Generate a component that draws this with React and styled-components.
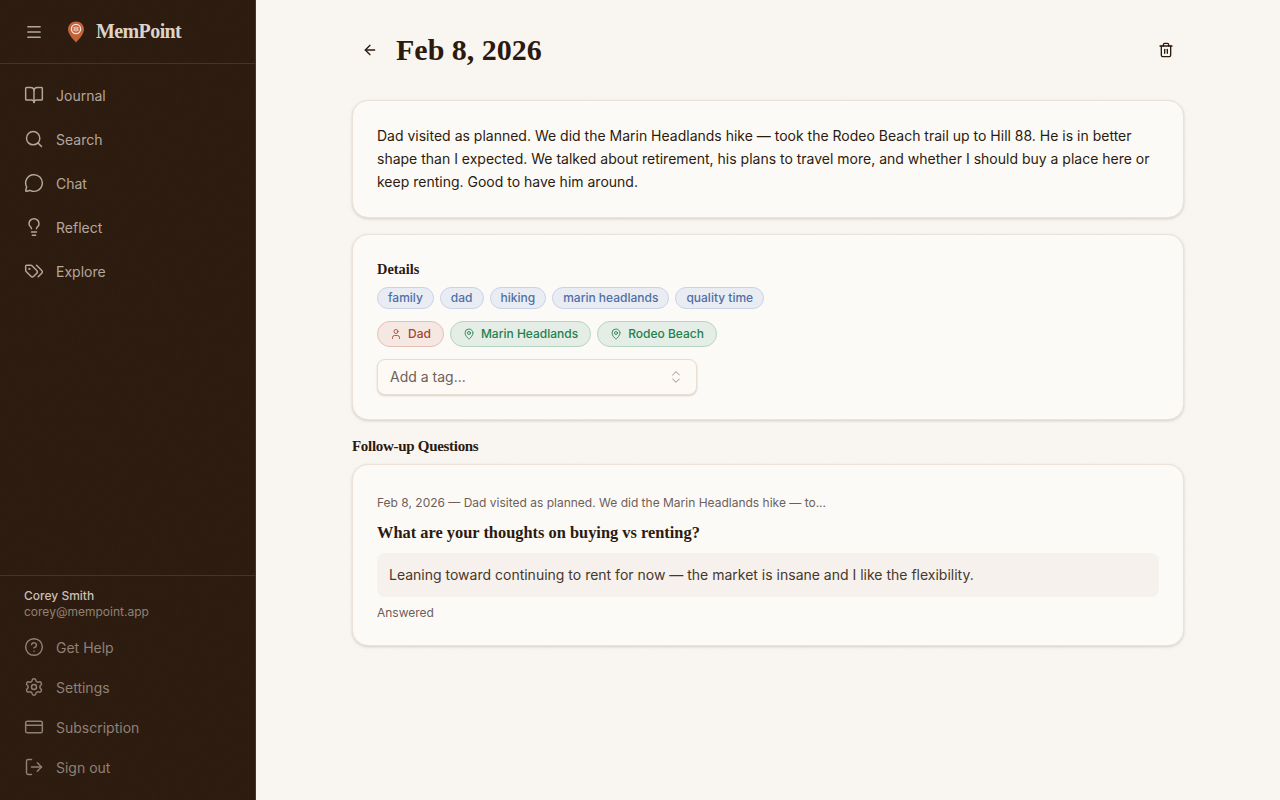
import styled, { createGlobalStyle } from "styled-components";
import {
  Menu,
  BookOpen,
  Search,
  MessageCircle,
  Lightbulb,
  CircleHelp,
  Settings,
  CreditCard,
  LogOut,
  ArrowLeft,
  Trash2,
  User,
  MapPin,
  ChevronsUpDown,
} from "lucide-react";

// paper grain, generated by the browser from an svg filter
const grain = `url("data:image/svg+xml,%3Csvg xmlns='http://www.w3.org/2000/svg' width='256' height='256'%3E%3Cfilter id='n'%3E%3CfeTurbulence type='fractalNoise' baseFrequency='0.8' numOctaves='3' stitchTiles='stitch'/%3E%3CfeColorMatrix type='saturate' values='0'/%3E%3C/filter%3E%3Crect width='256' height='256' filter='url(%23n)' opacity='0.04'/%3E%3C/svg%3E")`;

const GlobalStyle = createGlobalStyle`
  * { box-sizing: border-box; }
  html, body { margin: 0; padding: 0; height: 100%; }
  body {
    font-family: Inter, "Liberation Sans", sans-serif;
    background-color: #faf7f2;
    background-image: ${grain};
    color: #2c1a0e;
  }
`;

const serif = `"Liberation Serif", "DejaVu Serif", serif`;

const Shell = styled.div`
  display: flex;
  width: 100%;
  height: 100vh;
  overflow: hidden;
`;

const Sidebar = styled.aside`
  width: 256px;
  flex-shrink: 0;
  height: 100%;
  display: flex;
  flex-direction: column;
  background-color: #2a180c;
  background-image: ${grain};
  border-right: 1px solid #4a3528;
`;

const Brand = styled.div`
  height: 64px;
  display: flex;
  align-items: center;
  padding-left: 25px;
  border-bottom: 1px solid #46342a;
  color: #b3a79c;
`;

const Logo = styled.svg`
  margin-left: 23px;
  width: 20px;
  height: 22px;
`;

const BrandName = styled.span`
  margin-left: 10px;
  font-family: ${serif};
  font-size: 20px;
  font-weight: 700;
  letter-spacing: -0.6px;
  color: #dcd3c9;
`;

const Nav = styled.nav`
  flex: 1;
  padding-top: 9px;
  display: flex;
  flex-direction: column;
`;

const NavItem = styled.a`
  height: ${(p) => (p.$small ? "40px" : "44px")};
  display: flex;
  align-items: center;
  gap: 12px;
  padding-left: 24px;
  font-size: 14px;
  color: ${(p) => (p.$small ? "#8f8175" : "#b3a79c")};

  svg {
    width: 20px;
    height: 20px;
    stroke-width: 1.75;
    flex-shrink: 0;
  }
`;

const Footer = styled.div`
  border-top: 1px solid #46342a;
  padding-top: 12px;
  padding-bottom: 13px;
`;

const Account = styled.div`
  padding: 0 24px 7px;
`;

const AccountName = styled.div`
  font-size: 12px;
  font-weight: 500;
  line-height: 16px;
  color: #c9bfb5;
`;

const AccountEmail = styled.div`
  font-size: 12px;
  line-height: 16px;
  color: #8f8175;
`;

const Main = styled.main`
  flex: 1;
  min-width: 0;
  padding: 24px 96px;
`;

const Header = styled.header`
  height: 52px;
  display: flex;
  align-items: center;
  margin-bottom: 24px;
`;

const IconButton = styled.button`
  width: 36px;
  height: 36px;
  padding: 0;
  border: none;
  background: none;
  color: #2c1a0e;
  display: flex;
  align-items: center;
  justify-content: center;

  svg {
    width: 16px;
    height: 16px;
    stroke-width: 2;
  }
`;

const Title = styled.h1`
  flex: 1;
  margin: 0 0 0 8px;
  font-family: ${serif};
  font-size: 30px;
  font-weight: 700;
  color: #2c1a0e;
`;

const Card = styled.section`
  background: #fcfaf7;
  border: 1px solid #ebe2d8;
  border-radius: 16px;
  padding: 24px;
  margin-bottom: 16px;
  box-shadow: 0 1px 3px rgba(44, 26, 14, 0.18);
`;

const Body = styled.p`
  margin: -1px 0 0;
  font-size: 14px;
  line-height: 23px;
  color: #2c1a0e;
`;

const CardTitle = styled.h2`
  margin: 0 0 6px;
  font-family: ${serif};
  font-size: 14.4px;
  line-height: 21px;
  padding-bottom: 1px;
  font-weight: 700;
  color: #2c1a0e;
`;

const ChipRow = styled.div`
  display: flex;
  gap: 6px;
  margin-bottom: 12px;
`;

const Tag = styled.span`
  height: 22px;
  padding: 0 10px 1px;
  display: flex;
  align-items: center;
  border-radius: 999px;
  border: 1px solid #c9d4e6;
  background: #e9ecf2;
  color: #4f6fa8;
  font-size: 12px;
  font-weight: 500;
`;

const tones = {
  person: { bg: "#f5e8e3", line: "#e6bfb3", fg: "#a8452d" },
  place: { bg: "#e5eee6", line: "#b5d5c0", fg: "#24804f" },
};

const Entity = styled.span`
  height: 26px;
  padding: 0 12px 1px;
  display: flex;
  align-items: center;
  gap: 6px;
  border-radius: 999px;
  border: 1px solid ${(p) => tones[p.$tone].line};
  background: ${(p) => tones[p.$tone].bg};
  color: ${(p) => tones[p.$tone].fg};
  font-size: 12px;
  font-weight: 500;

  svg {
    width: 12px;
    height: 12px;
    margin-top: 1px;
    stroke-width: 1.75;
  }
`;

const Combo = styled.div`
  width: 320px;
  height: 36px;
  padding: 0 12px 1px;
  display: flex;
  align-items: center;
  justify-content: space-between;
  border: 1px solid #e8ddd1;
  border-radius: 8px;
  background: #fdfaf6;
  box-shadow: 0 1px 2px rgba(44, 26, 14, 0.18);
  font-size: 14px;
  color: #6e6057;

  svg {
    width: 16px;
    height: 16px;
    stroke-width: 1.5;
    color: #9a8e85;
  }
`;

const SectionTitle = styled.h2`
  margin: 16px 0 8px;
  font-family: ${serif};
  font-size: 15px;
  line-height: 20px;
  letter-spacing: -0.3px;
  font-weight: 700;
  color: #2c1a0e;
`;

const Excerpt = styled.div`
  font-size: 12px;
  line-height: 16px;
  margin-top: 6px;
  color: #6e6057;
`;

const Question = styled.h3`
  margin: 10px 0 8px;
  font-family: ${serif};
  font-size: 16.4px;
  line-height: 24px;
  font-weight: 700;
  color: #2c1a0e;
`;

const Answer = styled.div`
  padding: 12px;
  border-radius: 8px;
  background: #f6f1ec;
  font-size: 14px;
  line-height: 20px;
  color: #46372c;
`;

const Status = styled.div`
  margin-top: 8px;
  font-size: 12px;
  line-height: 16px;
  color: #6e6057;
`;

// the installed lucide Tags has a different shape, so this one is drawn by hand
const TagsIcon = () => (
  <svg viewBox="0 0 24 24" fill="none" stroke="currentColor" strokeLinecap="round" strokeLinejoin="round">
    <path d="m15 5 6.3 6.3a2.4 2.4 0 0 1 0 3.4L17 19" />
    <path d="M9.586 5.586A2 2 0 0 0 8.172 5H3a1 1 0 0 0-1 1v5.172a2 2 0 0 0 .586 1.414L8.29 18.29a2.426 2.426 0 0 0 3.42 0l3.58-3.58a2.426 2.426 0 0 0 0-3.42z" />
    <circle cx="6.5" cy="9.5" r=".5" fill="currentColor" />
  </svg>
);

const mainNav = [
  [BookOpen, "Journal"],
  [Search, "Search"],
  [MessageCircle, "Chat"],
  [Lightbulb, "Reflect"],
  [TagsIcon, "Explore"],
];

const footerNav = [
  [CircleHelp, "Get Help"],
  [Settings, "Settings"],
  [CreditCard, "Subscription"],
  [LogOut, "Sign out"],
];

const tags = ["family", "dad", "hiking", "marin headlands", "quality time"];

export default function App() {
  return (
    <>
      <GlobalStyle />
      <Shell>
        <Sidebar>
          <Brand>
            <Menu size={18} strokeWidth={2.25} />
            <Logo viewBox="0 0 20 22">
              <path d="M10 0.5c4.6 0 8 3.4 8 7.8 0 4.6-4.6 9.6-8 13.2-3.4-3.6-8-8.6-8-13.2 0-4.4 3.4-7.8 8-7.8z" fill="#c4623c" />
              <circle cx="10" cy="8" r="4.6" fill="none" stroke="#f5e6da" strokeWidth="1.3" />
              <path d="M8.2 6v4M10 5.4v5.2M11.8 6v4" stroke="#f5e6da" strokeWidth="1" />
            </Logo>
            <BrandName>MemPoint</BrandName>
          </Brand>
          <Nav>
            {mainNav.map(([Icon, label]) => (
              <NavItem key={label}>
                <Icon />
                {label}
              </NavItem>
            ))}
          </Nav>
          <Footer>
            <Account>
              <AccountName>Corey Smith</AccountName>
              <AccountEmail>corey@mempoint.app</AccountEmail>
            </Account>
            {footerNav.map(([Icon, label]) => (
              <NavItem key={label} $small>
                <Icon />
                {label}
              </NavItem>
            ))}
          </Footer>
        </Sidebar>
        <Main>
          <Header>
            <IconButton>
              <ArrowLeft />
            </IconButton>
            <Title>Feb 8, 2026</Title>
            <IconButton>
              <Trash2 />
            </IconButton>
          </Header>
          <Card>
            <Body>
              Dad visited as planned. We did the Marin Headlands hike — took the Rodeo Beach trail up to Hill 88. He is
              in better shape than I expected. We talked about retirement, his plans to travel more, and whether I
              should buy a place here or keep renting. Good to have him around.
            </Body>
          </Card>
          <Card>
            <CardTitle>Details</CardTitle>
            <ChipRow>
              {tags.map((t) => (
                <Tag key={t}>{t}</Tag>
              ))}
            </ChipRow>
            <ChipRow>
              <Entity $tone="person">
                <User />
                Dad
              </Entity>
              <Entity $tone="place">
                <MapPin />
                Marin Headlands
              </Entity>
              <Entity $tone="place">
                <MapPin />
                Rodeo Beach
              </Entity>
            </ChipRow>
            <Combo>
              Add a tag...
              <ChevronsUpDown />
            </Combo>
          </Card>
          <SectionTitle>Follow-up Questions</SectionTitle>
          <Card>
            <Excerpt>Feb 8, 2026 — Dad visited as planned. We did the Marin Headlands hike — to...</Excerpt>
            <Question>What are your thoughts on buying vs renting?</Question>
            <Answer>Leaning toward continuing to rent for now — the market is insane and I like the flexibility.</Answer>
            <Status>Answered</Status>
          </Card>
        </Main>
      </Shell>
    </>
  );
}
